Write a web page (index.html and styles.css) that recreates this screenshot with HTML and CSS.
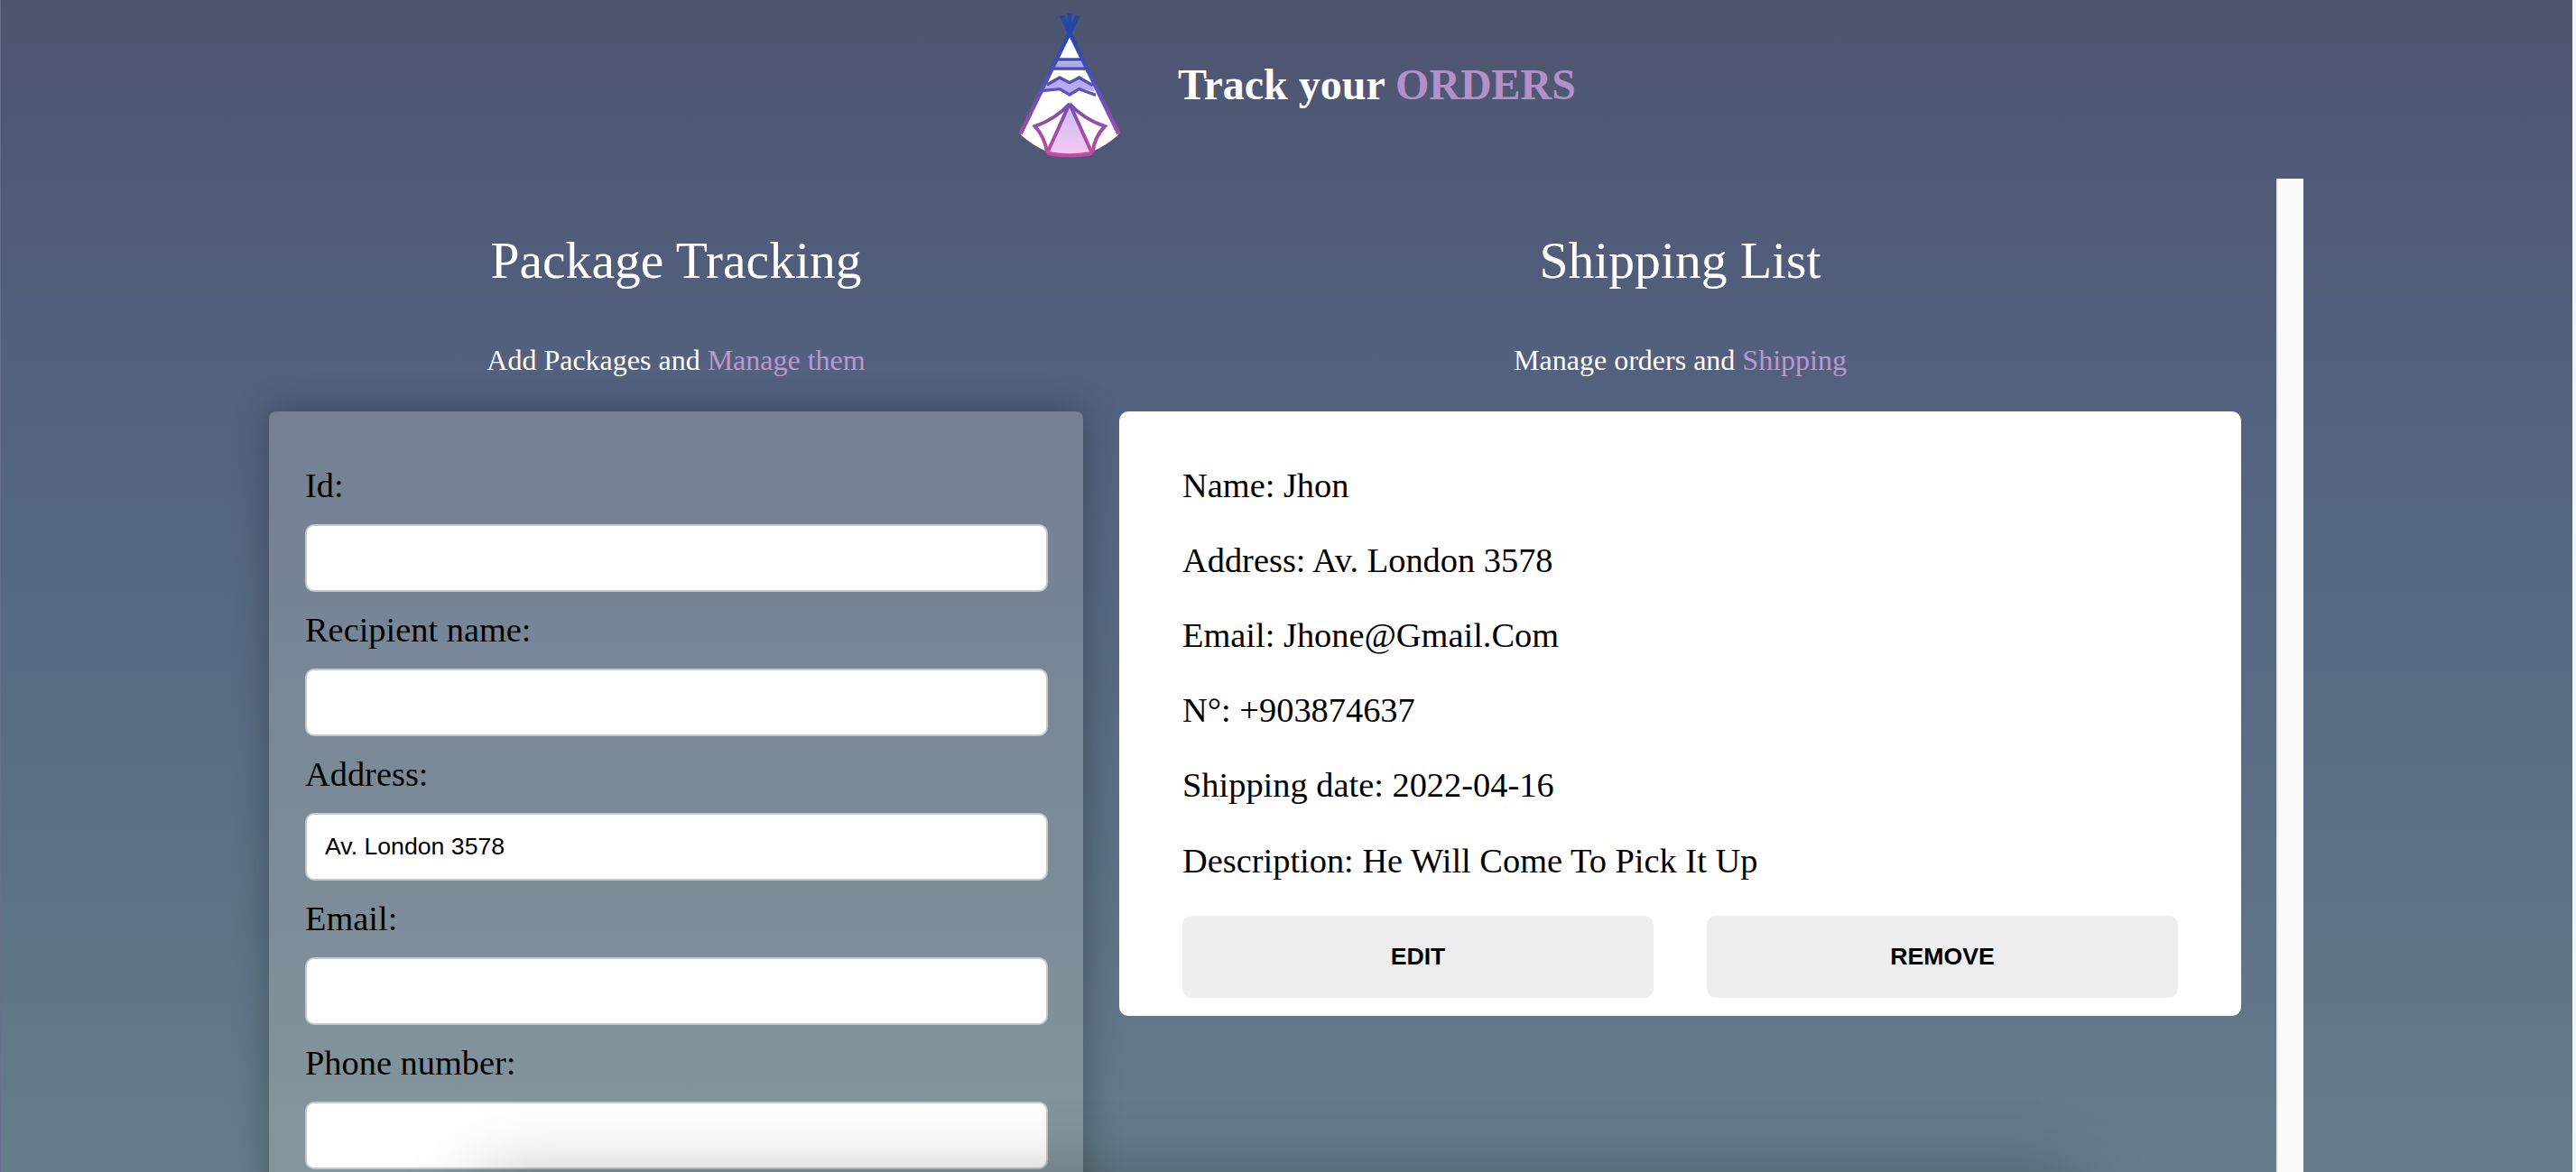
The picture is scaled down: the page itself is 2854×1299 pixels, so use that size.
FILE: index.html
```html
<!DOCTYPE html>
<html lang="en">
  <head>
    <meta charset="UTF-8">
    <title>Track your orders</title>
    <link rel="stylesheet" href="styles.css">
  </head>
  <body>
    <header class="top">
      <svg class="logo" width="200" height="190" viewBox="0 0 600 570">
        <defs>
          <linearGradient id="line" gradientUnits="userSpaceOnUse" x1="0" y1="100" x2="0" y2="520">
            <stop offset="0" stop-color="#2148a8"/>
            <stop offset="0.45" stop-color="#5a50b4"/>
            <stop offset="1" stop-color="#c64aa6"/>
          </linearGradient>
          <linearGradient id="door" x1="0" y1="0" x2="0" y2="1">
            <stop offset="0" stop-color="#cdbdf2"/>
            <stop offset="1" stop-color="#f5c8f2"/>
          </linearGradient>
        </defs>
        <path d="M315 110 L152 448 Q315 590 478 448 Z" fill="#fff"/>
        <path d="M272 205 H358 L366 222 H264 Z" fill="#aeaaf0"/>
        <path d="M240 280 L282 258 L315 275 L347 258 L392 282 L398 304 L347 293 L315 312 L282 293 L228 304 Z" fill="#b8aaf0"/>
        <path d="M315 360 L245 505 Q315 520 385 505 Z" fill="url(#door)"/>
        <g fill="none" stroke="url(#line)">
          <path d="M315 108 L152 445 M315 108 L478 445" stroke-width="14"/>
          <path d="M290 52 L315 110 L342 52 M315 44 V110" stroke-width="15"/>
          <path d="M268 198 H362 M260 228 H370" stroke-width="10"/>
          <path d="M240 282 L282 258 L315 275 L347 258 L392 284" stroke-width="10"/>
          <path d="M222 302 L282 296 L315 315 L347 296 L402 316" stroke-width="10"/>
          <path d="M315 345 L240 510 M315 345 L390 510" stroke-width="12"/>
          <path d="M315 345 Q270 395 200 420 Q232 455 240 505 M315 345 Q360 395 432 420 Q398 455 392 505" stroke-width="12"/>
          <path d="M240 509 Q315 524 390 509" stroke-width="12"/>
        </g>
      </svg>
      <h1 class="brand">Track your <span class="accent">ORDERS</span></h1>
    </header>

    <main class="content">
      <section class="col col-form">
        <h2>Package Tracking</h2>
        <p class="sub">Add Packages and <span class="accent">Manage them</span></p>
        <form class="card-form">
          <label for="f-id">Id:</label>
          <input id="f-id" type="text">
          <label for="f-name">Recipient name:</label>
          <input id="f-name" type="text">
          <label for="f-address">Address:</label>
          <input id="f-address" type="text" value="Av. London 3578">
          <label for="f-email">Email:</label>
          <input id="f-email" type="text">
          <label for="f-phone">Phone number:</label>
          <input id="f-phone" type="text">
        </form>
      </section>

      <section class="col col-list">
        <h2>Shipping List</h2>
        <p class="sub">Manage orders and <span class="accent">Shipping</span></p>
        <div class="card-order">
          <p>Name: Jhon</p>
          <p>Address: Av. London 3578</p>
          <p>Email: Jhone@Gmail.Com</p>
          <p>N°: +903874637</p>
          <p>Shipping date: 2022-04-16</p>
          <p>Description: He Will Come To Pick It Up</p>
          <div class="actions">
            <button type="button">EDIT</button>
            <button type="button">REMOVE</button>
          </div>
        </div>
      </section>

      <div class="scrollbar"></div>
    </main>

    <div class="fold-shadow"></div>
  </body>
</html>
```

FILE: styles.css
```css
html, body {
  margin: 0;
  height: 1299px;
  overflow: hidden;
}
body {
  position: relative;
  font-family: "Liberation Serif", "Times New Roman", serif;
  background: linear-gradient(to bottom, #4d5470 0%, #536380 37%, #5c7186 74%, #667d8b 100%);
  color: #000;
  border-left: 1px solid #66708a;
  border-right: 4px solid #f4f4f4;
  box-sizing: border-box;
}
.top {
  height: 198px;
  display: flex;
  justify-content: center;
  align-items: flex-start;
  gap: 25px;
  padding-right: 25px;
}
.brand {
  margin: 66px 0 0;
  font-size: 48px;
  line-height: 56px;
  color: #fff;
}
.accent {
  color: #b390c9;
}
.content {
  display: flex;
  align-items: flex-start;
  padding-left: 297px;
}
.col h2 {
  margin: 58px 0 0;
  font-size: 57.6px;
  line-height: 66px;
  font-weight: 400;
  text-align: center;
  color: #fff;
}
.col .sub {
  margin: 58px 0 0;
  font-size: 32px;
  line-height: 38px;
  text-align: center;
  color: #fff;
}
.col .sub .accent {
  color: #bd97cc;
}
.col-form {
  width: 902px;
  margin-right: 40px;
}
.col-list {
  width: 1243px;
  margin-right: 39px;
}
.card-form {
  margin-top: 38px;
  padding: 60px 39px 40px 40px;
  border-radius: 8px;
  background: rgba(248, 248, 228, 0.2);
  box-shadow: 0 0 40px rgba(0, 0, 0, 0.3);
}
.card-form label {
  display: block;
  font-size: 38.4px;
  line-height: 44px;
  margin-bottom: 21px;
}
.card-form input {
  display: block;
  width: 100%;
  height: 75px;
  box-sizing: border-box;
  margin: 0 0 20px;
  padding: 0 20px;
  border: 2px solid #c8c8c8;
  border-radius: 10px;
  background: #fff;
  font-family: "Liberation Sans", Arial, sans-serif;
  font-size: 26.67px;
  color: #000;
}
.card-order {
  margin-top: 38px;
  height: 670px;
  box-sizing: border-box;
  padding: 59.6px 70px 0;
  border-radius: 10px;
  background: #fff;
}
.card-order p {
  margin: 0 0 39.2px;
  font-size: 38.4px;
  line-height: 44px;
}
.actions {
  display: flex;
  gap: 59px;
}
.actions button {
  flex: 1;
  height: 91px;
  border: 0;
  border-radius: 10px;
  background: #eee;
  font-family: "Liberation Sans", Arial, sans-serif;
  font-size: 26.67px;
  font-weight: 700;
  color: #000;
}
.scrollbar {
  width: 28px;
  height: 1101px;
  background: #fafafa;
  border-left: 2px solid #e8e8e8;
}
.fold-shadow {
  position: absolute;
  left: 530px;
  top: 1310px;
  width: 1770px;
  height: 300px;
  box-shadow: 0 0 80px rgba(0, 0, 0, 0.3);
}
```
